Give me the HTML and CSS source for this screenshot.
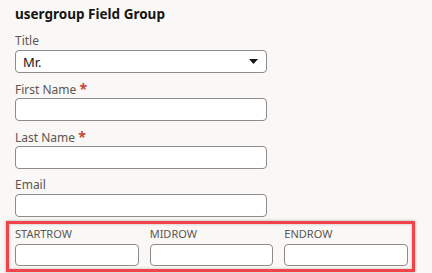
FILE: index.html
```html
<!DOCTYPE html>
<html>
<head>
<meta charset="utf-8">
<link rel="stylesheet" href="styles.css">
</head>
<body>
<div class="page">
  <h1 class="title">usergroup Field Group</h1>
  <div class="field">
    <label class="label">Title</label>
    <div class="select"><span class="select-value">Mr.</span><svg class="caret" width="9" height="5" viewBox="0 0 9 5"><path d="M0 0H9L4.5 5Z" fill="#161513"/></svg></div>
  </div>
  <div class="field">
    <label class="label">First Name <span class="req">*</span></label>
    <div class="input"></div>
  </div>
  <div class="field">
    <label class="label">Last Name <span class="req">*</span></label>
    <div class="input"></div>
  </div>
  <div class="field">
    <label class="label">Email</label>
    <div class="input"></div>
  </div>
  <div class="row-box">
    <div class="col">
      <label class="label caps">STARTROW</label>
      <div class="input"></div>
    </div>
    <div class="col">
      <label class="label caps">MIDROW</label>
      <div class="input"></div>
    </div>
    <div class="col">
      <label class="label caps">ENDROW</label>
      <div class="input"></div>
    </div>
  </div>
</div>
</body>
</html>
```
FILE: styles.css
```css
html, body {
  margin: 0;
  padding: 0;
  background: #f9f8f6;
}
body {
  font-family: "Noto Sans", "Open Sans", sans-serif;
  color: #161513;
  width: 432px;
  height: 273px;
  overflow: hidden;
}
.page {
  padding: 4px 0 0 15px;
  width: 252px;
}
.title {
  margin: 0;
  font-size: 13.5px;
  font-weight: 700;
  line-height: 20px;
  height: 28px;
}
.field {
  display: flex;
  flex-direction: column;
  height: 48px;
}
.label {
  font-size: 12px;
  line-height: 18px;
  color: #5b5752;
  height: 18px;
}
.req {
  color: #c74634;
  font-size: 14px;
  font-weight: 700;
}
.select, .input {
  box-sizing: border-box;
  height: 23px;
  background: #fff;
  border: 1px solid #8f8a85;
  border-radius: 4px;
}
.select {
  display: flex;
  align-items: center;
  justify-content: space-between;
  padding: 0 8px 0 7px;
}
.select-value {
  font-size: 13px;
}
.row-box {
  margin-left: -9px;
  margin-top: -3px;
  width: 409px;
  height: 51px;
  box-sizing: border-box;
  border: 3px solid #f0434a;
  box-shadow: 0 0 3px rgba(0,0,0,0.3), inset 0 0 3px rgba(0,0,0,0.25);
  padding: 1px 4px 0 6px;
  display: grid;
  grid-template-columns: repeat(3, 1fr);
  column-gap: 11px;
}
.col {
  display: flex;
  flex-direction: column;
}
.caps {
  font-size: 11px;
  line-height: 17px;
  height: 19px;
}
.col .input {
  height: 22px;
}
```
